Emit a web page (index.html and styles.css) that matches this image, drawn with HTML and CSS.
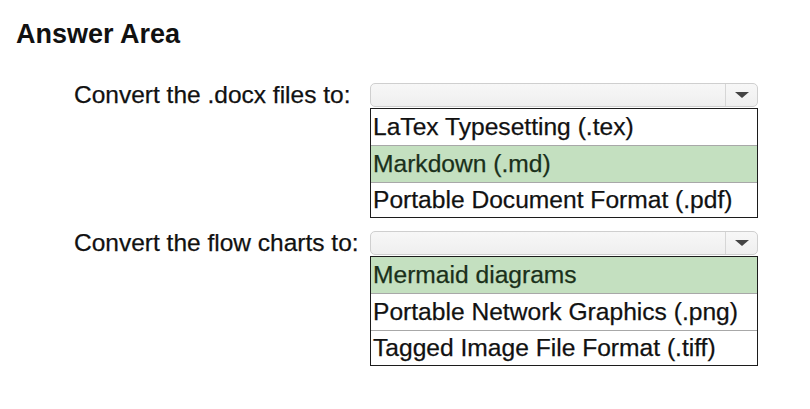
FILE: index.html
```html
<!DOCTYPE html>
<html>
<head>
<meta charset="utf-8">
<link rel="stylesheet" href="styles.css">
</head>
<body>
<h1 class="title">Answer Area</h1>
<div class="question q1">
  <div class="label">Convert the .docx files to:</div>
  <div class="select">
    <div class="dropdown"><div class="arrow-cell"><span class="arrow"></span></div></div>
    <div class="list">
      <div class="option">LaTex Typesetting (.tex)</div>
      <div class="option selected">Markdown (.md)</div>
      <div class="option">Portable Document Format (.pdf)</div>
    </div>
  </div>
</div>
<div class="question q2">
  <div class="label">Convert the flow charts to:</div>
  <div class="select">
    <div class="dropdown"><div class="arrow-cell"><span class="arrow"></span></div></div>
    <div class="list">
      <div class="option selected">Mermaid diagrams</div>
      <div class="option">Portable Network Graphics (.png)</div>
      <div class="option">Tagged Image File Format (.tiff)</div>
    </div>
  </div>
</div>
</body>
</html>
```
FILE: styles.css
```css
html, body {
  margin: 0;
  padding: 0;
  background: #ffffff;
}
body {
  font-family: "Liberation Sans", Arial, sans-serif;
  color: #111;
}
.title {
  margin: 19px 0 0 16px;
  font-size: 27px;
  font-weight: bold;
  line-height: 30px;
  color: #111;
}
.question {
  display: flex;
  align-items: flex-start;
  padding-left: 74px;
}
.q1 { margin-top: 34px; }
.q2 { margin-top: 13px; }
.label {
  width: 296px;
  font-size: 24.5px;
  line-height: 24px;
  white-space: nowrap;
  -webkit-text-stroke: 0.25px #111;
}
.select {
  width: 388px;
}
.dropdown {
  height: 22px;
  border: 1px solid #cfcfcf;
  border-radius: 5px;
  background: linear-gradient(#f7f7f7, #efefef);
  display: flex;
  justify-content: flex-end;
}
.arrow-cell {
  width: 31px;
  border-left: 1px solid #d6d6d6;
  display: flex;
  align-items: center;
  justify-content: center;
}
.arrow {
  width: 0;
  height: 0;
  border-left: 7px solid transparent;
  border-right: 7px solid transparent;
  border-top: 6px solid #444;
}
.list {
  margin-top: 1px;
  border: 1px solid #1c1c1c;
}
.option {
  height: 36px;
  line-height: 36px;
  padding-left: 2px;
  font-size: 24.6px;
  white-space: nowrap;
  border-top: 1px solid #a8a8a8;
  -webkit-text-stroke: 0.25px #111;
}
.option:first-child {
  border-top: none;
}
.option:last-child {
  height: 34px;
  line-height: 34px;
}
.option.selected {
  background: #c4e0c0;
  color: #1a301a;
  -webkit-text-stroke: 0.25px #1a301a;
}
```
